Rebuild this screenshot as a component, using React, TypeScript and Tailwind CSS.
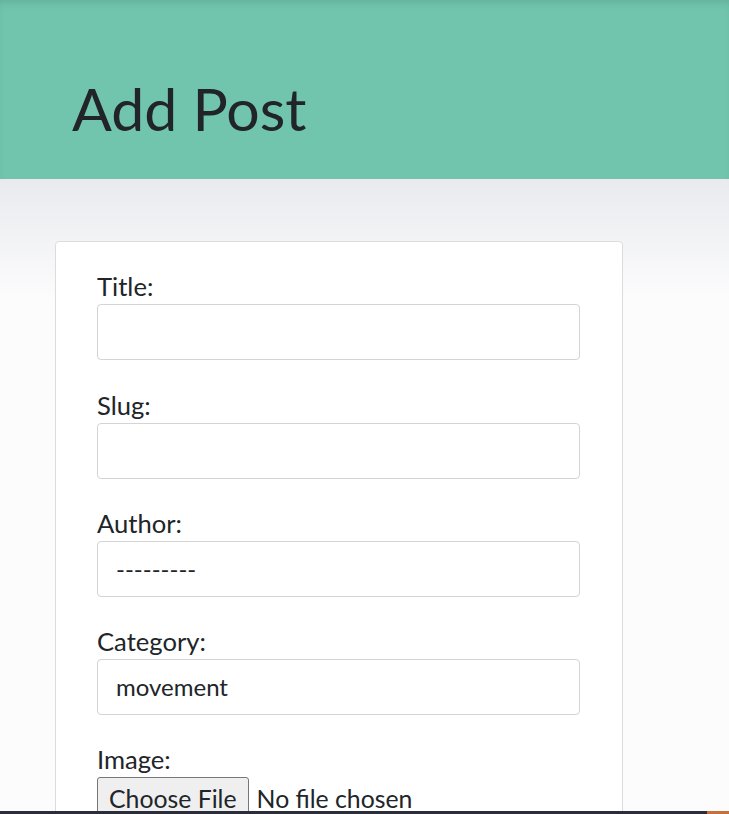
export default function App() {
  const fields = [
    { label: "Title:", value: "", gap: "mb-[27px]" },
    { label: "Slug:", value: "", gap: "mb-[26px]" },
    { label: "Author:", value: "---------", gap: "mb-[26px]" },
    { label: "Category:", value: "movement", gap: "mb-[26px]" },
  ]

  return (
    <div className="min-h-screen bg-[#fcfcfd] font-['Lato','Liberation_Sans',sans-serif] text-[#212529]">
      {/* Header */}
      <header className="h-[179px] bg-[#71c5ad] shadow-[inset_0_6px_8px_-4px_rgba(0,0,0,0.12)] pt-[79px] px-[72px]">
        <h1 className="text-[59px] leading-none font-normal">Add Post</h1>
      </header>

      {/* Main */}
      <main className="bg-[linear-gradient(to_bottom,#e9eaee,#fcfcfd_120px)] pt-[62px] pl-[55px] pr-[106px]">
        <div className="bg-white border border-[#dcdcdc] rounded-[4px] pt-[26px] pl-[41px] pr-[42px] pb-[40px]">
          {fields.map((f) => (
            <div key={f.label} className={f.gap}>
              <label className="block text-[25.6px] leading-[36px]">{f.label}</label>
              <div className="h-[56px] border border-[#d4d4d4] rounded-[4px] flex items-center px-[18px] text-[24px]">
                {f.value}
              </div>
            </div>
          ))}
          <div>
            <label className="block text-[25.6px] leading-[36px]">Image:</label>
            <input
              type="file"
              className="text-[24.8px] text-[#212529] file:mr-[8px] file:px-[11px] file:py-[2px] file:bg-[#efefef] file:border file:border-[#767676] file:rounded-[3px] file:text-[#212529]"
            />
          </div>
        </div>
      </main>

      {/* Bottom strip */}
      <div className="fixed bottom-0 left-0 right-0 h-[3px] flex">
        <div className="flex-1 bg-[#2c2d3a]" />
        <div className="w-[22px] bg-[#c4703f]" />
      </div>
    </div>
  )
}
